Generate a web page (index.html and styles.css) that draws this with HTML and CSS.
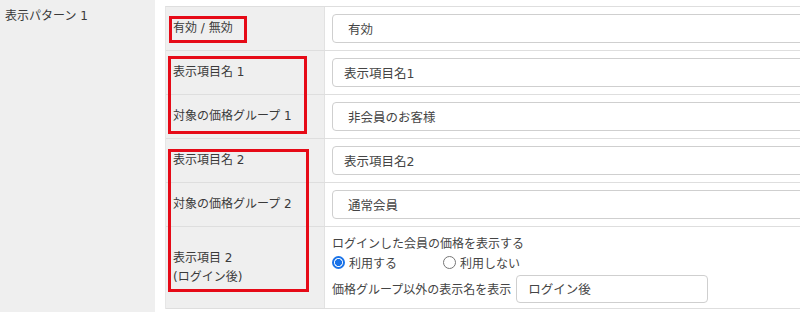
FILE: index.html
```html
<!DOCTYPE html>
<html lang="ja">
<head>
<meta charset="utf-8">
<link rel="stylesheet" href="styles.css">
</head>
<body>
<div class="page">
  <aside class="side">表示パターン 1</aside>
  <main class="main">
    <div class="table">
      <div class="row">
        <div class="label">有効 / 無効</div>
        <div class="value"><div class="field sel">有効</div></div>
      </div>
      <div class="row">
        <div class="label">表示項目名 1</div>
        <div class="value"><div class="field txt">表示項目名1</div></div>
      </div>
      <div class="row">
        <div class="label">対象の価格グループ 1</div>
        <div class="value"><div class="field sel">非会員のお客様</div></div>
      </div>
      <div class="row">
        <div class="label">表示項目名 2</div>
        <div class="value"><div class="field txt">表示項目名2</div></div>
      </div>
      <div class="row">
        <div class="label">対象の価格グループ 2</div>
        <div class="value"><div class="field sel">通常会員</div></div>
      </div>
      <div class="row tall">
        <div class="label">表示項目 2<br>(ログイン後)</div>
        <div class="value stack">
          <div class="line">ログインした会員の価格を表示する</div>
          <div class="line radios">
            <label class="opt first"><span class="radio on"></span>利用する</label>
            <label class="opt"><span class="radio"></span>利用しない</label>
          </div>
          <div class="line alt">
            <span>価格グループ以外の表示名を表示</span>
            <div class="field small">ログイン後</div>
          </div>
        </div>
      </div>
    </div>
  </main>
</div>
<div class="mark m1"></div>
<div class="mark m2"></div>
<div class="mark m3"></div>
</body>
</html>
```
FILE: styles.css
```css
html, body {
  margin: 0;
  padding: 0;
  background: #fff;
  overflow: hidden;
}
body {
  font-family: "DejaVu Sans", "Noto Sans CJK JP", sans-serif;
  font-size: 12px;
  color: #3a3a3a;
  width: 800px;
  height: 312px;
  position: relative;
}
.page {
  display: flex;
  height: 312px;
}
.side {
  width: 150px;
  flex: none;
  background: #efefef;
  padding: 7px 0 0 5px;
  line-height: 18px;
}
.main {
  flex: 1;
  padding: 6px 0 0 10px;
  overflow: hidden;
}
.table {
  border-top: 1px solid #dedede;
  border-left: 1px solid #e6e6e6;
}
.row {
  display: grid;
  grid-template-columns: 159px 1fr;
  height: 43px;
  border-bottom: 1px solid #dedede;
}
.row.tall {
  height: 81px;
}
.label {
  background: #efefef;
  border-right: 1px solid #e2e2e2;
  padding: 0 7px;
  display: flex;
  align-items: center;
  line-height: 19px;
}
.value {
  padding-left: 7px;
  display: flex;
  align-items: center;
  overflow: hidden;
}
.field {
  box-sizing: border-box;
  height: 29px;
  width: calc(100% + 20px);
  flex: none;
  border: 1px solid #cfcfcf;
  border-radius: 4px;
  background: #fff;
  display: flex;
  align-items: center;
  color: #444;
  font-size: 12.5px;
}
.field.txt { padding-left: 11px; }
.field.sel { padding-left: 15px; }
.stack {
  flex-direction: column;
  align-items: flex-start;
  justify-content: flex-start;
  padding-top: 5px;
}
.line {
  display: flex;
  align-items: center;
  height: 20px;
  color: #444;
}
.radios { height: 21px; }
.opt {
  display: flex;
  align-items: center;
}
.opt.first { margin-right: 46px; }
.radio {
  box-sizing: border-box;
  width: 13px;
  height: 13px;
  border: 1px solid #767676;
  border-radius: 50%;
  margin-right: 4px;
  background: #fff;
}
.radio.on {
  border: 2px solid #1a73e8;
  background: radial-gradient(circle, #1a73e8 0 3.2px, #fff 3.8px);
}
.alt {
  height: 29px;
  margin-top: 1px;
}
.field.small {
  width: 192px;
  height: 28px;
  margin-left: 5px;
  padding-left: 11px;
  font-size: 12.5px;
}
.mark {
  position: absolute;
  box-sizing: border-box;
  border: 3px solid #e60a17;
}
.m1 { left: 169px; top: 16px; width: 78px; height: 27px; }
.m2 { left: 168px; top: 56px; width: 139px; height: 78px; }
.m3 { left: 168px; top: 149px; width: 141px; height: 143px; }
```
